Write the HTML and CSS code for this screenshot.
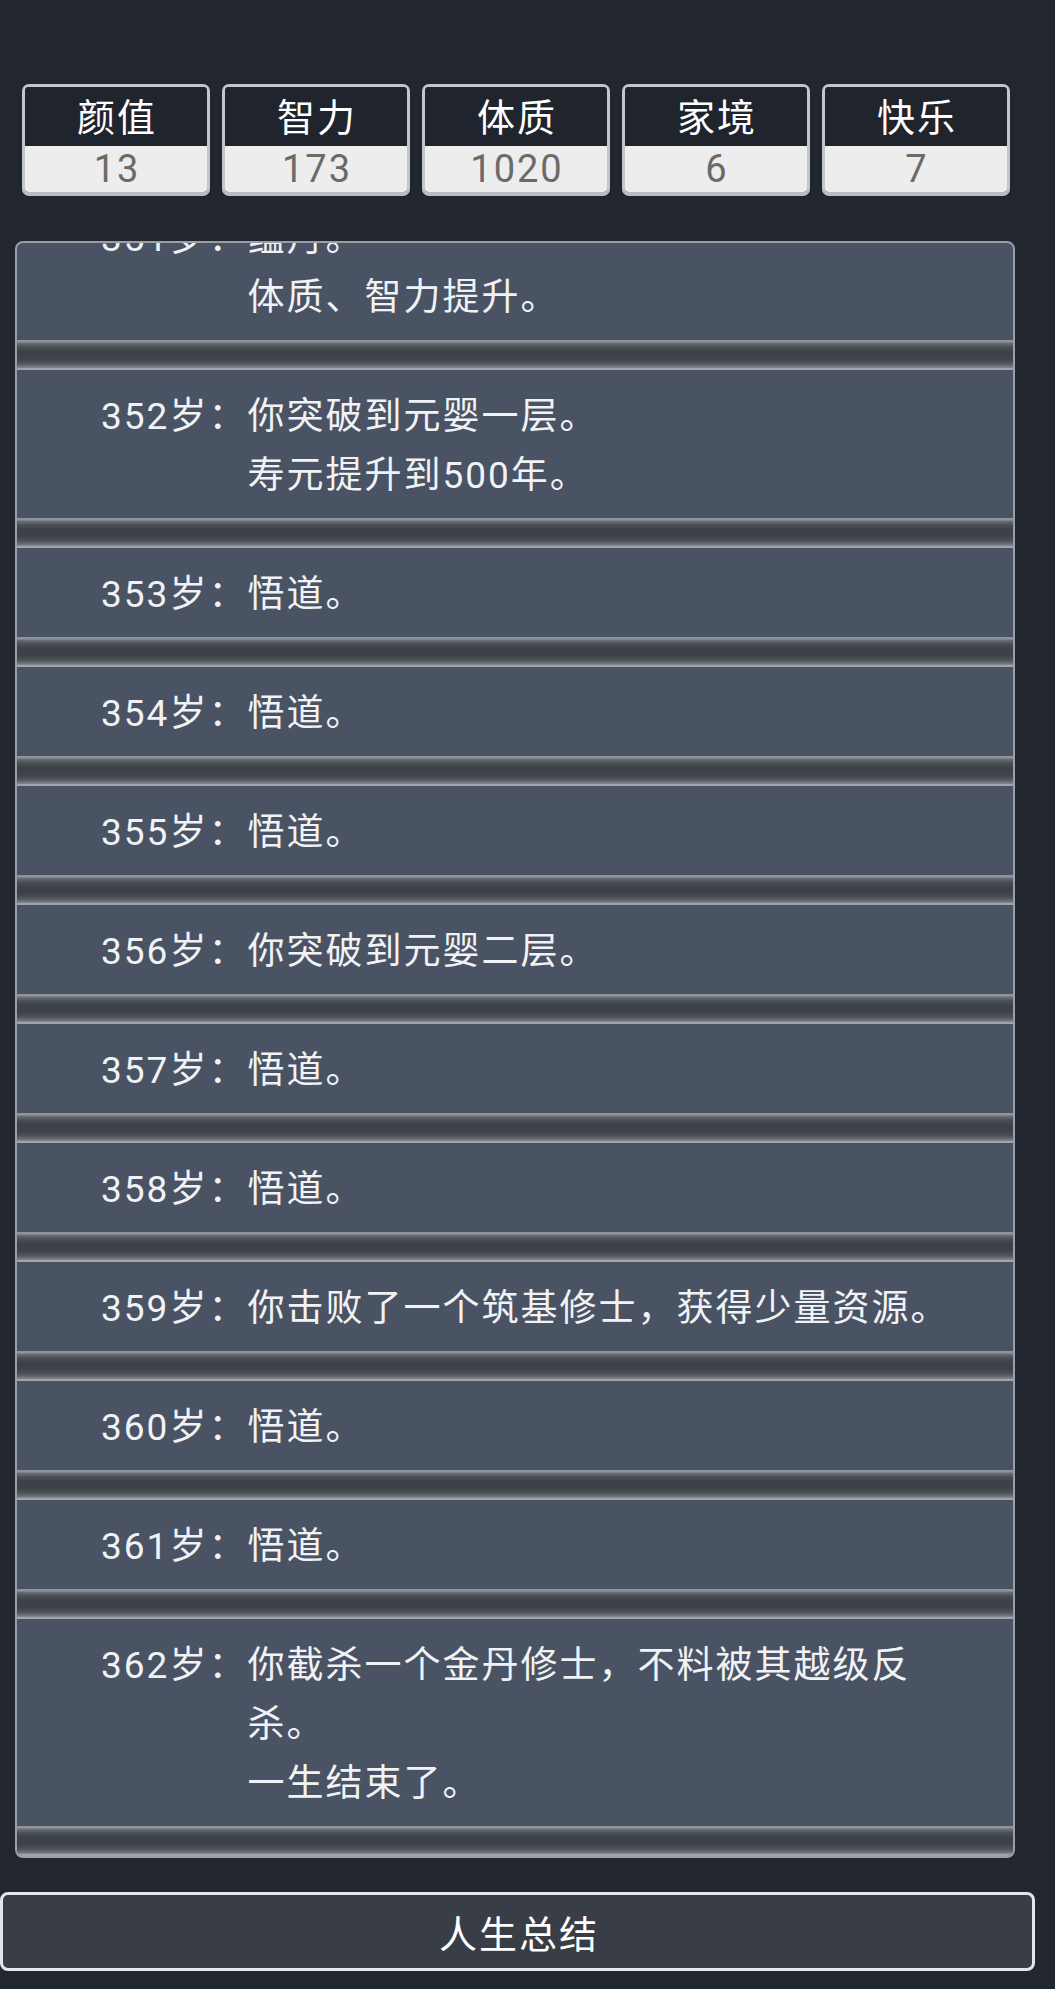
FILE: index.html
```html
<!DOCTYPE html>
<html lang="zh-CN">
<head>
<meta charset="utf-8">
<title>人生重开</title>
<link rel="stylesheet" href="styles.css">
</head>
<body>
<div class="page">
  <div class="stats">
    <div class="stat"><div class="stat-name">颜值</div><div class="stat-value">13</div></div>
    <div class="stat"><div class="stat-name">智力</div><div class="stat-value">173</div></div>
    <div class="stat"><div class="stat-name">体质</div><div class="stat-value">1020</div></div>
    <div class="stat"><div class="stat-name">家境</div><div class="stat-value">6</div></div>
    <div class="stat"><div class="stat-name">快乐</div><div class="stat-value">7</div></div>
  </div>

  <div class="log">
    <ul class="log-list">
      <li class="entry"><div class="row"><span class="age">351岁：</span><span class="text">蕴丹。<br>体质、智力提升。</span></div></li>
      <li class="entry"><div class="row"><span class="age">352岁：</span><span class="text">你突破到元婴一层。<br>寿元提升到500年。</span></div></li>
      <li class="entry"><div class="row"><span class="age">353岁：</span><span class="text">悟道。</span></div></li>
      <li class="entry"><div class="row"><span class="age">354岁：</span><span class="text">悟道。</span></div></li>
      <li class="entry"><div class="row"><span class="age">355岁：</span><span class="text">悟道。</span></div></li>
      <li class="entry"><div class="row"><span class="age">356岁：</span><span class="text">你突破到元婴二层。</span></div></li>
      <li class="entry"><div class="row"><span class="age">357岁：</span><span class="text">悟道。</span></div></li>
      <li class="entry"><div class="row"><span class="age">358岁：</span><span class="text">悟道。</span></div></li>
      <li class="entry"><div class="row"><span class="age">359岁：</span><span class="text">你击败了一个筑基修士，获得少量资源。</span></div></li>
      <li class="entry"><div class="row"><span class="age">360岁：</span><span class="text">悟道。</span></div></li>
      <li class="entry"><div class="row"><span class="age">361岁：</span><span class="text">悟道。</span></div></li>
      <li class="entry"><div class="row"><span class="age">362岁：</span><span class="text">你截杀一个金丹修士，不料被其越级反杀。<br>一生结束了。</span></div></li>
    </ul>
  </div>

  <button class="summary" type="button">人生总结</button>
</div>
</body>
</html>
```

FILE: styles.css
```css
html, body {
  margin: 0;
  padding: 0;
  background: #21262f;
}

body {
  font-family: Roboto, "Noto Sans CJK SC", sans-serif;
  color: #eef0f3;
}

.page {
  width: 1055px;
  padding-top: 84px;
}

/* ---------- attribute boxes ---------- */
.stats {
  display: flex;
  gap: 12px;
  margin-left: 22px;
  width: 988px;
}

.stat {
  flex: 1 1 0;
  box-sizing: border-box;
  height: 112px;
  border: 3px solid #c3c6cb;
  border-bottom-width: 4px;
  border-bottom-color: #b9bcc1;
  border-radius: 7px;
  overflow: hidden;
  display: flex;
  flex-direction: column;
  text-align: center;
}

.stat-name {
  height: 59px;
  line-height: 63px;
  background: #20242d;
  color: #ffffff;
  font-size: 38px;
  letter-spacing: 2px;
  padding-left: 2px;
}

.stat-value {
  flex: 1;
  line-height: 46px;
  background: #ededed;
  color: #6a6a6a;
  font-size: 38px;
  letter-spacing: 2px;
  padding-left: 2px;
}

/* ---------- life log ---------- */
.log {
  box-sizing: border-box;
  width: 1000px;
  margin: 45px 0 0 15px;
  border: 2px solid #9a9ea6;
  border-radius: 8px;
  background: #4a5363;
  overflow: hidden;
}

.log-list {
  list-style: none;
  margin: -51px 0 0 0;
  padding: 0;
}

.entry::after {
  content: "";
  display: block;
  height: 30px;
  background: linear-gradient(
    to bottom,
    #8f949b 0px,
    #8f949b 2px,
    #6c7077 3px,
    #4a4e55 7px,
    #3c4047 12px,
    #3d4148 18px,
    #4d5158 23px,
    #6a6e75 26px,
    #878b91 28px,
    #a1a5ab 28px,
    #a1a5ab 30px
  );
}

.row {
  display: flex;
  align-items: flex-start;
  padding: 17px 42px 13px 84px;
  font-size: 37px;
  line-height: 59px;
  letter-spacing: 2px;
  color: #f0f2f5;
}

.age {
  flex: none;
  white-space: nowrap;
}

.text {
  flex: 1 1 auto;
  min-width: 0;
}

/* ---------- summary button ---------- */
.summary {
  display: block;
  box-sizing: border-box;
  width: 1035px;
  height: 79px;
  margin: 34px 0 0 0;
  padding: 0 0 0 3px;
  border: 3px solid #e4e6ea;
  border-radius: 8px;
  background: #393d46;
  color: #ffffff;
  font-family: Roboto, "Noto Sans CJK SC", sans-serif;
  font-size: 38px;
  letter-spacing: 2px;
  line-height: 80px;
  text-align: center;
}
```
